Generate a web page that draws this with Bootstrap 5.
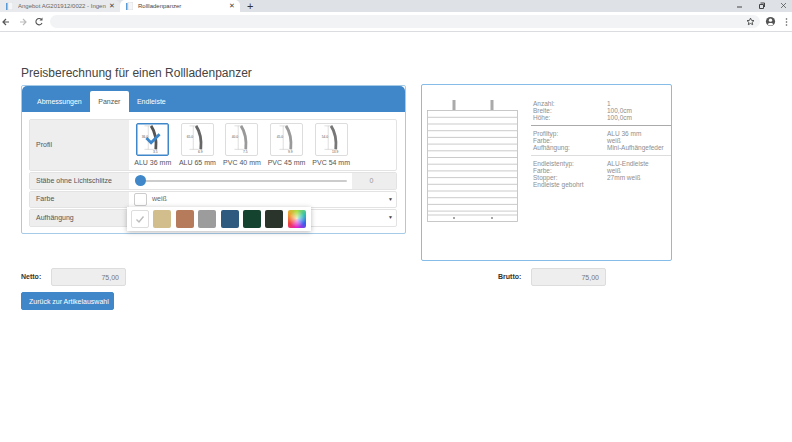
<!DOCTYPE html>
<html lang="de"><head><meta charset="utf-8"><title>Rollladenpanzer</title>
<link rel="stylesheet" href="https://cdn.jsdelivr.net/npm/bootstrap@5.3.0/dist/css/bootstrap.min.css">
<style>
html,body{height:100%;overflow:hidden}
body{font-family:"Liberation Sans",Arial,sans-serif;font-size:7px;color:#666;background:#fff}
.tabstrip{height:12px;background:#dee1e6;font-size:6px;line-height:12px;color:#666}
.tab-a{width:120px;background:#e8eaed;border-radius:0 5px 0 0;padding-left:6px}
.tab-b{width:120px;background:#fff;border-radius:5px 5px 0 0;padding-left:6px;color:#444}
.tab-t{flex:1;margin-left:5px;white-space:nowrap;overflow:hidden}
.tab-x{width:9px;margin-right:4px;font-size:7px;text-align:center;color:#444}
.plus{font-size:11px;margin-left:7px;color:#333;line-height:12px}
.win{color:#555;font-size:7px;gap:15px;padding-right:5px}
.toolbar{height:20px;border-bottom:1px solid #dadce0;padding:3px 3px 3px 0}
.nav-ic{width:16px;height:12px;flex:none}
.nav-ic:first-child{margin-left:1px}
.omni{flex:1;height:13px;background:#f1f3f4;border-radius:7px;margin:0 5px 0 1px;padding-right:5px}
.page{padding:34px 21px 0}
.page-ttl{font-size:12px;line-height:15px;font-weight:400;color:#444;margin:0 0 3px}
.main-row{gap:15px}
.calc{width:385px;height:149px;border:1px solid #a6cbe8;border-radius:2px;margin-top:1px;overflow:visible;--bs-card-bg:#fff}
.calc-head{background:#3f87c9;height:26px;padding:5px 0 0 7px;border:0;border-radius:1px 1px 0 0}
.calc-tabs{border:0;gap:0}
.calc-tabs .nav-link{font-size:7px;line-height:9px;color:#fff;padding:6px 8px 6px;border:0;border-radius:2px 2px 0 0;height:21px;margin:0;background:transparent}
.calc-tabs .nav-link.active{background:#fff;color:#555;padding:6px 8.5px}
.calc-body{padding:7px 8px 0 7px}
.opt{border:1px solid #e3e3e3;border-radius:2px;margin-bottom:1px;position:relative}
.opt-lbl{width:99px;background:#eee;padding-left:6px;color:#555;flex:none}
.opt-profil{height:52px}
.opt-line{height:17.500px}
.tiles{padding:3px 0 0 1.500px}
.tile{width:44.600px;display:flex;flex-direction:column;align-items:center}
.tile-box{width:33px;height:33px;border:1px solid #ddd;border-radius:2px;background:#fff;display:block;flex:none}
.tile-box.on{border:1px solid #3f87c9;box-shadow:inset 0 0 0 .5px #3f87c9}
.tile-cap{font-size:7px;line-height:9px;margin-top:2px;white-space:nowrap;color:#555}
.sld{flex:1;padding-left:6px;padding-right:5px;position:relative}
.sld-track{height:2px;background:#ccc;border-radius:1px;width:100%;position:relative}
.sld-knob{position:absolute;left:0;top:-5px;width:11px;height:11px;border-radius:50%;background:#3f87c9}
.sld-val{width:44px;background:#eee;color:#999;align-self:stretch;flex:none;padding-right:5px}
.sel-box{flex:1;padding-left:5px;padding-right:2px;gap:5px}
.chk{width:13px;height:13px;border:1px solid #ccc;border-radius:2px;background:#fff;flex:none}
.car{margin-left:auto;font-size:5px;color:#444;margin-right:1px}
.pop{position:absolute;left:97px;top:-3px;width:184px;height:24px;background:#fff;box-shadow:0 1px 5px rgba(0,0,0,.28);padding:3px 0 0 4px;gap:4.400px;z-index:5}
.sw{width:18px;height:18px;border-radius:2px;flex:none}
.sw-w{border:1px solid #ddd;background:#fff}
.s1{background:#d2bd8c}.s2{background:#b67b5a}.s3{background:#9c9c9c}.s4{background:#2e5a7f}.s5{background:#14432f}.s6{background:#2a342b}
.s7{background:radial-gradient(circle at 50% 50%,rgba(255,255,255,.75),rgba(255,255,255,0) 65%),conic-gradient(#a8e040,#30c0b0,#3060f0,#e020d0,#f04040,#f0a030,#a8e040)}
.preview{width:251px;height:177px;border:1px solid #85bce8;border-radius:2px;padding:15px 0 0 5px}
.shade{flex:none;width:92px;height:124px;display:block}
.spec{flex:1;padding:0 0 0 14px;font-size:6.500px;line-height:7px;color:#8e8e8e}
.spec-k{width:74px;flex:none}
.spec-h1,.spec-h2{margin:4px 0 4px -2px;opacity:1;border:0;height:1px}
.spec-h1{background:#aaa}.spec-h2{background:#ddd}
.totals{margin-top:7px;height:18px}
.tot-l{font-weight:700;font-size:7px;color:#333;width:30px;flex:none}
.tot-i{width:75px;height:18px;min-height:0;font-size:7px;padding:0 6px;text-align:right;background:#eee;border:1px solid #ddd;border-radius:2px;color:#777}
.tot-b{margin-left:372px}
.tot-b .tot-l{width:33px}
.back{font-size:7px;line-height:9px;padding:4px 7px;margin-top:6px;height:18px;width:93px;background:#3f87c9;border:1px solid #3f87c9;border-radius:2px;white-space:nowrap;color:#fff}
</style></head><body>
<div class="tabstrip d-flex">
 <div class="tab-a d-flex align-items-center">
  <svg width="7" height="8" viewBox="0 0 7 8"><rect x="2" y="0" width="5" height="8" fill="#f4f6f9" stroke="#ccc" stroke-width=".5"/><rect x="0" y="1" width="1.500" height="7" fill="#5a9bd5"/></svg>
  <span class="tab-t">Angebot AG201912/0022 - Ingen</span><span class="tab-x">✕</span></div>
 <div class="tab-b d-flex align-items-center">
  <svg width="7" height="8" viewBox="0 0 7 8"><rect x="2" y="0" width="5" height="8" fill="#f4f6f9" stroke="#ccc" stroke-width=".5"/><rect x="0" y="1" width="1.500" height="7" fill="#5a9bd5"/></svg>
  <span class="tab-t">Rollladenpanzer</span><span class="tab-x">✕</span></div>
 <span class="plus">+</span>
 <div class="win ms-auto d-flex align-items-center">
  <svg width="7" height="8" viewBox="0 0 7 8"><path d="M1 5h5" stroke="#444"/></svg>
  <svg width="7" height="8" viewBox="0 0 7 8"><path d="M1.500 2.500h4v4h-4zM2.500 1h4v4" fill="none" stroke="#444"/></svg>
  <svg width="7" height="8" viewBox="0 0 7 8"><path d="M1 1l5 5M6 1l-5 5" stroke="#444" stroke-width=".7"/></svg>
 </div>
</div>
<div class="toolbar d-flex align-items-center">
 <svg class="nav-ic" viewBox="0 0 16 12"><path d="M8 6H2M5 3L2 6l3 3" fill="none" stroke="#555" stroke-width="1.200"/></svg>
 <svg class="nav-ic" viewBox="0 0 16 12"><path d="M3 6h6M6 3l3 3-3 3" fill="none" stroke="#bbb" stroke-width="1.200"/></svg>
 <svg class="nav-ic" width="14" viewBox="0 0 16 12"><path d="M8.500 3.500A3.200 3.200 0 1 0 9 7" fill="none" stroke="#555" stroke-width="1.100"/><path d="M9.500 1.500v3h-3z" fill="#555"/></svg>
 <div class="omni d-flex align-items-center justify-content-end">
  <svg width="9" height="9" viewBox="0 0 24 24"><path d="M12 3l2.800 6 6.500.7-4.900 4.400 1.400 6.400L12 17.200 6.200 20.500l1.400-6.400L2.700 9.700 9.200 9z" fill="none" stroke="#444" stroke-width="2.400"/></svg>
 </div>
 <svg width="11" height="11" viewBox="0 0 12 12"><circle cx="6" cy="6" r="5" fill="#555"/><circle cx="6" cy="4.600" r="1.800" fill="#fff"/><path d="M2.800 9c1-1.800 5.400-1.800 6.400 0a4.200 4.200 0 0 1-6.400 0z" fill="#fff"/></svg>
 <svg width="5" height="10" viewBox="0 0 5 10" class="ms-2"><circle cx="2.500" cy="2" r=".8" fill="#555"/><circle cx="2.500" cy="5" r=".8" fill="#555"/><circle cx="2.500" cy="8" r=".8" fill="#555"/></svg>
</div>

<div class="page">
 <h1 class="page-ttl">Preisberechnung für einen Rollladenpanzer</h1>
 <div class="main-row d-flex align-items-start">
  <div class="card calc">
   <div class="card-header calc-head">
    <ul class="nav nav-tabs calc-tabs">
     <li class="nav-item"><a class="nav-link" href="#">Abmessungen</a></li>
     <li class="nav-item"><a class="nav-link active" href="#">Panzer</a></li>
     <li class="nav-item"><a class="nav-link" href="#">Endleiste</a></li>
    </ul>
   </div>
   <div class="calc-body">
    <div class="opt opt-profil d-flex">
     <div class="opt-lbl d-flex align-items-center">Profil</div>
     <div class="tiles d-flex">
      <div class="tile"><svg class="tile-box on" viewBox="0 0 33 33"><path d="M12 2v25M8 2h8M8 27h10" stroke="#aaa" stroke-width=".4" fill="none"/><path d="M15 2c4 6 6 15 5 25" fill="none" stroke="#555" stroke-width="3"/><text x="5" y="15" font-size="3.500" fill="#555" font-family="Liberation Sans">36.0</text><text x="17" y="31" font-size="3.500" fill="#555" font-family="Liberation Sans">3.5</text><path d="M10 15l5 5 9-9" fill="none" stroke="#3c87cc" stroke-width="3"/></svg><div class="tile-cap">ALU 36 mm</div></div>
      <div class="tile"><svg class="tile-box" viewBox="0 0 33 33"><path d="M12 2v25M8 2h8M8 27h10" stroke="#aaa" stroke-width=".4" fill="none"/><path d="M15 2c4 6 6 15 5 25" fill="none" stroke="#666" stroke-width="3"/><text x="5" y="15" font-size="3.500" fill="#555" font-family="Liberation Sans">65.0</text><text x="17" y="31" font-size="3.500" fill="#555" font-family="Liberation Sans">6.9</text></svg><div class="tile-cap">ALU 65 mm</div></div>
      <div class="tile"><svg class="tile-box" viewBox="0 0 33 33"><path d="M13 2v25M9 2h8M9 27h10" stroke="#aaa" stroke-width=".4" fill="none"/><path d="M16 2c4 6 6 15 5 25" fill="none" stroke="#999" stroke-width="3"/><text x="6" y="15" font-size="3.500" fill="#555" font-family="Liberation Sans">40.0</text><text x="18" y="31" font-size="3.500" fill="#555" font-family="Liberation Sans">7.5</text></svg><div class="tile-cap">PVC 40 mm</div></div>
      <div class="tile"><svg class="tile-box" viewBox="0 0 33 33"><path d="M13 2v25M9 2h8M9 27h10" stroke="#aaa" stroke-width=".4" fill="none"/><path d="M16 2c4 6 6 15 5 25" fill="none" stroke="#999" stroke-width="3"/><text x="6" y="15" font-size="3.500" fill="#555" font-family="Liberation Sans">45.0</text><text x="18" y="31" font-size="3.500" fill="#555" font-family="Liberation Sans">9.9</text></svg><div class="tile-cap">PVC 45 mm</div></div>
      <div class="tile"><svg class="tile-box" viewBox="0 0 33 33"><path d="M13 2v25M9 2h8M9 27h10" stroke="#aaa" stroke-width=".4" fill="none"/><path d="M16 2c4 6 6 15 5 25" fill="none" stroke="#777" stroke-width="3"/><text x="6" y="15" font-size="3.500" fill="#555" font-family="Liberation Sans">54.0</text><text x="17" y="31" font-size="3.500" fill="#555" font-family="Liberation Sans">13.9</text></svg><div class="tile-cap">PVC 54 mm</div></div>
     </div>
    </div>
    <div class="opt opt-line d-flex align-items-center">
     <div class="opt-lbl align-self-stretch d-flex align-items-center">Stäbe ohne Lichtschlitze</div>
     <div class="sld"><div class="sld-track"><div class="sld-knob"></div></div></div>
     <div class="sld-val d-flex align-items-center justify-content-center">0</div>
    </div>
    <div class="opt opt-line d-flex align-items-center">
     <div class="opt-lbl align-self-stretch d-flex align-items-center">Farbe</div>
     <div class="sel-box d-flex align-items-center"><span class="chk"></span><span>weiß</span><span class="car">▼</span></div>
    </div>
    <div class="opt opt-line d-flex align-items-center">
     <div class="opt-lbl align-self-stretch d-flex align-items-center">Aufhängung</div>
     <div class="sel-box d-flex align-items-center"><span class="car">▼</span></div>
     <div class="pop d-flex">
      <span class="sw sw-w d-flex align-items-center justify-content-center"><svg width="10" height="10" viewBox="0 0 10 10"><path d="M1.500 5.500l2.500 2.500 4.500-5.500" fill="none" stroke="#bbb" stroke-width="1.400"/></svg></span>
      <span class="sw s1"></span><span class="sw s2"></span><span class="sw s3"></span><span class="sw s4"></span><span class="sw s5"></span><span class="sw s6"></span><span class="sw s7"></span>
     </div>
    </div>
   </div>
  </div>
  <div class="preview d-flex">
   <svg class="shade" viewBox="0 0 92 124">
    <rect x="25.500" y="0" width="3" height="10" fill="#aaa"/><rect x="63.500" y="0" width="3" height="10" fill="#aaa"/>
    <rect x=".5" y="10.500" width="90" height="111" fill="#fff" stroke="#bbb" stroke-width=".8"/>
    <path d="M1 17.300h89M1 24h89M1 30.700h89M1 37.400h89M1 44.100h89M1 50.800h89M1 57.500h89M1 64.200h89M1 70.900h89M1 77.600h89M1 84.300h89M1 91h89M1 97.700h89M1 104.400h89M1 111.100h89M1 115h89" stroke="#b5b5b5" stroke-width=".7"/>
    <circle cx="27" cy="118" r="1" fill="#888"/><circle cx="65" cy="118" r="1" fill="#888"/>
   </svg>
   <div class="spec">
    <div class="d-flex"><span class="spec-k">Anzahl:</span><span>1</span></div>
    <div class="d-flex"><span class="spec-k">Breite:</span><span>100,0cm</span></div>
    <div class="d-flex"><span class="spec-k">Höhe:</span><span>100,0cm</span></div>
    <hr class="spec-h1">
    <div class="d-flex"><span class="spec-k">Profiltyp:</span><span>ALU 36 mm</span></div>
    <div class="d-flex"><span class="spec-k">Farbe:</span><span>weiß</span></div>
    <div class="d-flex"><span class="spec-k">Aufhängung:</span><span>Mini-Aufhängefeder</span></div>
    <hr class="spec-h2">
    <div class="d-flex"><span class="spec-k">Endleistentyp:</span><span>ALU-Endleiste</span></div>
    <div class="d-flex"><span class="spec-k">Farbe:</span><span>weiß</span></div>
    <div class="d-flex"><span class="spec-k">Stopper:</span><span>27mm weiß</span></div>
    <div>Endleiste gebohrt</div>
   </div>
  </div>
 </div>
 <div class="totals d-flex align-items-center">
  <span class="tot-l">Netto:</span><input class="form-control tot-i" value="75,00" readonly>
  <div class="tot-b d-flex align-items-center"><span class="tot-l">Brutto:</span><input class="form-control tot-i" value="75,00" readonly></div>
 </div>
 <button class="btn btn-primary back" type="button">Zurück zur Artikelauswahl</button>
</div>
<script src="https://cdn.jsdelivr.net/npm/bootstrap@5.3.0/dist/js/bootstrap.bundle.min.js"></script>
</body></html>
